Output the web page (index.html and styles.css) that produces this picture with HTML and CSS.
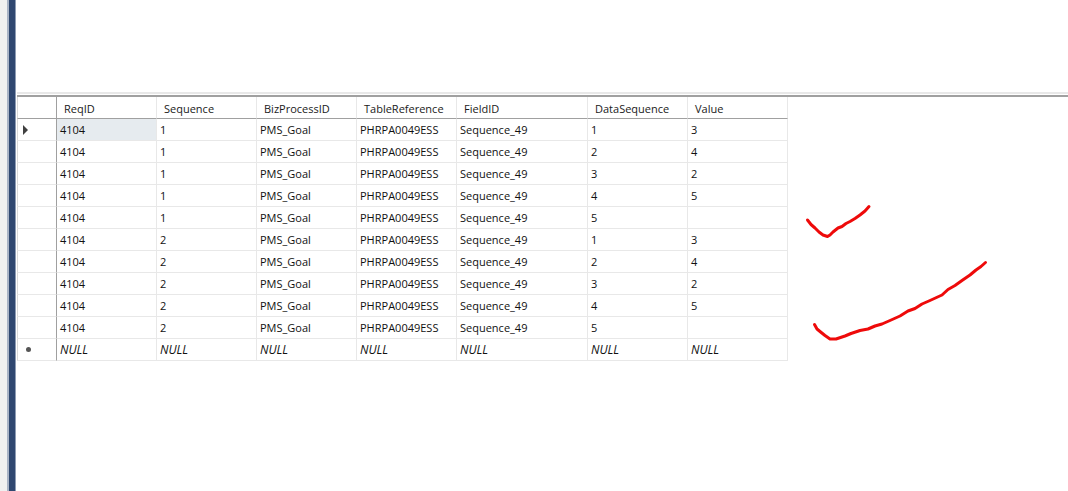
FILE: index.html
```html
<!DOCTYPE html>
<html lang="en">
<head>
<meta charset="utf-8">
<title>Query results</title>
<link rel="stylesheet" href="styles.css">
</head>
<body>
<div class="app">
  <div class="rail"></div>
  <main class="pane">
    <div class="top-space"></div>
    <div class="band"></div>
    <div class="rule"></div>
    <table class="grid">
      <colgroup>
        <col class="c-row"><col class="c-w"><col class="c-w"><col class="c-w"><col class="c-w"><col class="c-wide"><col class="c-w"><col class="c-w">
      </colgroup>
      <thead>
        <tr><th class="corner"></th><th>ReqID</th><th>Sequence</th><th>BizProcessID</th><th>TableReference</th><th>FieldID</th><th>DataSequence</th><th>Value</th></tr>
      </thead>
      <tbody>
        <tr><td class="rh"><span class="arrow"></span></td><td class="sel">4104</td><td>1</td><td>PMS_Goal</td><td>PHRPA0049ESS</td><td>Sequence_49</td><td>1</td><td>3</td></tr>
        <tr><td class="rh"></td><td>4104</td><td>1</td><td>PMS_Goal</td><td>PHRPA0049ESS</td><td>Sequence_49</td><td>2</td><td>4</td></tr>
        <tr><td class="rh"></td><td>4104</td><td>1</td><td>PMS_Goal</td><td>PHRPA0049ESS</td><td>Sequence_49</td><td>3</td><td>2</td></tr>
        <tr><td class="rh"></td><td>4104</td><td>1</td><td>PMS_Goal</td><td>PHRPA0049ESS</td><td>Sequence_49</td><td>4</td><td>5</td></tr>
        <tr><td class="rh"></td><td>4104</td><td>1</td><td>PMS_Goal</td><td>PHRPA0049ESS</td><td>Sequence_49</td><td>5</td><td></td></tr>
        <tr><td class="rh"></td><td>4104</td><td>2</td><td>PMS_Goal</td><td>PHRPA0049ESS</td><td>Sequence_49</td><td>1</td><td>3</td></tr>
        <tr><td class="rh"></td><td>4104</td><td>2</td><td>PMS_Goal</td><td>PHRPA0049ESS</td><td>Sequence_49</td><td>2</td><td>4</td></tr>
        <tr><td class="rh"></td><td>4104</td><td>2</td><td>PMS_Goal</td><td>PHRPA0049ESS</td><td>Sequence_49</td><td>3</td><td>2</td></tr>
        <tr><td class="rh"></td><td>4104</td><td>2</td><td>PMS_Goal</td><td>PHRPA0049ESS</td><td>Sequence_49</td><td>4</td><td>5</td></tr>
        <tr><td class="rh"></td><td>4104</td><td>2</td><td>PMS_Goal</td><td>PHRPA0049ESS</td><td>Sequence_49</td><td>5</td><td></td></tr>
        <tr class="new"><td class="rh"><span class="dot"></span></td><td>NULL</td><td>NULL</td><td>NULL</td><td>NULL</td><td>NULL</td><td>NULL</td><td>NULL</td></tr>
      </tbody>
    </table>
  </main>
</div>
<svg class="ink" width="1068" height="491" viewBox="0 0 1068 491" aria-hidden="true">
  <polyline points="807.5,220 811,224.5 815,228 819,232 823,235 827.5,236.5 830,235 833,232 838,228 842,226.5 846,223.5 850,221.5 855,218.5 860,215 865,211 869,206.5"/>
  <polyline points="814.5,324.5 817,329 820,331.5 825,335.5 830,339 836,339 845,336 851,333.5 860,330.5 868,329 875,326 882,324 890,320.5 900,316 908,311 915,308.5 922,304 930,300.5 936.5,297.5 942,295 948,289.5 955,285.5 962,280.5 970,275 976,270 981,266.5 985.5,262.5"/>
</svg>
</body>
</html>
```
FILE: styles.css
```css
* { box-sizing: border-box; }
html, body { margin: 0; height: 100%; background: #fff; overflow: hidden; }
body { font-family: "Open Sans", "Noto Sans", "Liberation Sans", sans-serif; font-size: 11px; color: #111; }
.app { display: flex; height: 491px; }
.rail {
  flex: 0 0 16px;
  background: #2f4770;
  border-left: 7px solid #f0f0f0;
  border-right: 1px solid #8e9cb4;
  box-shadow: inset 2px 0 0 #a9b3c5;
}
.pane { flex: 1; min-width: 0; display: flex; flex-direction: column; }
.top-space { height: 92px; }
.band { height: 2px; background: #e8e8e8; margin-left: 1px; margin-bottom: 1px; }
.rule { height: 2px; background: #a0a0a0; margin-left: 1px; }
.grid {
  border-collapse: separate;
  border-spacing: 0;
  table-layout: fixed;
  width: 771px;
  margin-left: 1px;
}
.c-row { width: 40px; }
.c-w { width: 100px; }
.c-wide { width: 131px; }
.grid th, .grid td {
  padding: 0;
  white-space: nowrap;
  overflow: hidden;
  text-align: left;
  font-weight: 400;
  border-right: 1px solid #e8e8e8;
  border-bottom: 1px solid #e8e8e8;
}
.grid th {
  height: 22px;
  padding-left: 7px;
  padding-top: 1px;
  border-bottom-color: #a0a0a0;
  color: #1a1a1a;
}
.grid td { height: 22px; padding-left: 3px; }
.grid tr > :first-child { border-left: 1px solid #d8d8d8; border-right: 1px solid #a0a0a0; padding: 0; }
.grid th.corner { border-right-color: #a0a0a0; }
.grid .sel { background: #e6ebef; }
.new td { font-style: italic; font-size: 12px; }
.rh { position: relative; text-align: center; }
.arrow {
  display: block;
  width: 0; height: 0;
  margin-left: 5px;
  border-left: 5px solid #404040;
  border-top: 5px solid transparent;
  border-bottom: 5px solid transparent;
}
.dot {
  display: block;
  width: 5px; height: 5px;
  margin-left: 8px;
  border-radius: 50%;
  background: #555;
}
.ink { position: absolute; left: 0; top: 0; pointer-events: none; }
.ink polyline { fill: none; stroke: #ee0a0a; stroke-width: 3; stroke-linecap: round; stroke-linejoin: round; }
```
